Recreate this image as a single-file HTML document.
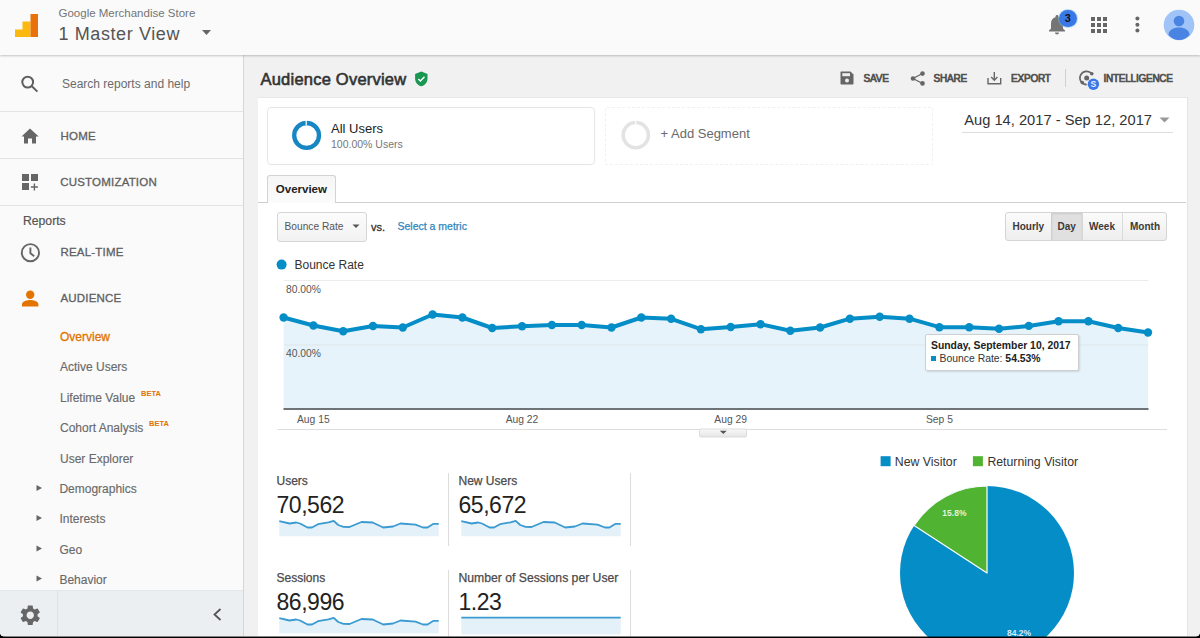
<!DOCTYPE html>
<html><head><meta charset="utf-8">
<style>
*{margin:0;padding:0;box-sizing:border-box}
html,body{width:1200px;height:638px;overflow:hidden;background:#000}
body{position:relative;font-family:"Liberation Sans",sans-serif}
.a{position:absolute}
.t{position:absolute;line-height:1;white-space:nowrap}
#page{position:absolute;left:0;top:0;width:1200px;height:637px;background:#f1f1f1;border-radius:0 0 5px 5px;overflow:hidden}
#hdr{position:absolute;left:0;top:0;width:1200px;height:54.5px;background:#fafafa;box-shadow:0 1px 2px rgba(0,0,0,.22);z-index:5}
#side{position:absolute;left:0;top:54px;width:244px;height:582px;background:#fafafa;border-right:1px solid #d6d6d6}
.sep{position:absolute;left:0;width:243px;height:1px;background:#e3e3e3}
.nav{color:#606060;font-size:11.5px;font-weight:normal;-webkit-text-stroke:0.3px #606060;letter-spacing:0.2px}
.sub{color:#6a6a6a;font-size:12px;-webkit-text-stroke:0.15px #6a6a6a}
.beta{color:#e37400;font-size:7.5px;font-weight:bold}
.tb{color:#505050;font-size:10px;font-weight:normal;-webkit-text-stroke:0.7px #505050;letter-spacing:-0.2px}
#panel{position:absolute;left:258px;top:97px;width:930px;height:539px;background:#fff;border-right:1px solid #e4e4e4;border-top:1px solid #e8e8e8}
</style></head><body>
<div id="page">
<!-- HEADER -->
<div id="hdr">
  <svg class="a" style="left:0;top:0" width="60" height="54">
    <path d="M15,29.5 H22.5 V21.5 H30.5 V37 H15 Z" fill="#fbb90f"/>
    <rect x="30.5" y="14" width="7.5" height="23" fill="#e8710a"/>
  </svg>
  <div class="t" style="left:58.5px;top:7.6px;font-size:11.5px;color:#757575">Google Merchandise Store</div>
  <div class="t" style="left:58.5px;top:25px;font-size:18px;letter-spacing:0.6px;color:#555">1 Master View</div>
  <svg class="a" style="left:200px;top:28px" width="14" height="10"><path d="M2,2 H11 L6.5,7 Z" fill="#666"/></svg>
  <!-- bell -->
  <svg class="a" style="left:1046px;top:12px" width="22" height="24" viewBox="0 0 22 24">
    <path d="M11,22.5 c1.1,0 2,-.9 2,-2 h-4 c0,1.1 .9,2 2,2z M17,16.5 v-5 c0,-3.1 -1.6,-5.6 -4.5,-6.3 V4.5 c0,-.8 -.7,-1.5 -1.5,-1.5 s-1.5,.7 -1.5,1.5 v.7 C6.6,5.9 5,8.4 5,11.5 v5 l-2,2 v1 h16 v-1 l-2,-2z" fill="#757575"/>
  </svg>
  <div class="a" style="left:1059px;top:9.8px;width:17.5px;height:17.5px;border-radius:50%;background:#3b78e7;box-shadow:0 0 0 1px rgba(120,200,230,.5)"></div>
  <div class="t" style="left:1063.3px;top:12.6px;font-size:11px;font-weight:bold;color:#111;width:9px;text-align:center">3</div>
  <!-- apps -->
  <svg class="a" style="left:1091px;top:17px" width="17" height="16">
    <g fill="#666">
      <rect x="0" y="0" width="4" height="4"/><rect x="6" y="0" width="4" height="4"/><rect x="12" y="0" width="4" height="4"/>
      <rect x="0" y="6" width="4" height="4"/><rect x="6" y="6" width="4" height="4"/><rect x="12" y="6" width="4" height="4"/>
      <rect x="0" y="12" width="4" height="4"/><rect x="6" y="12" width="4" height="4"/><rect x="12" y="12" width="4" height="4"/>
    </g>
  </svg>
  <svg class="a" style="left:1133px;top:15px" width="9" height="19">
    <g fill="#666"><circle cx="4.4" cy="3.4" r="2"/><circle cx="4.4" cy="9.8" r="2"/><circle cx="4.4" cy="15.5" r="2"/></g>
  </svg>
  <!-- avatar -->
  <svg class="a" style="left:1163px;top:9px" width="32" height="32" viewBox="0 0 32 32">
    <circle cx="16" cy="16" r="15.3" fill="#a0c3f8"/>
    <circle cx="16" cy="12" r="5.3" fill="#4a84e2"/>
    <path d="M5.5,26 c0,-5 5,-7.5 10.5,-7.5 s10.5,2.5 10.5,7.5 c-2.8,3 -6.5,5 -10.5,5 s-7.7,-2 -10.5,-5z" fill="#4a84e2"/>
  </svg>
</div>

<!-- SIDEBAR -->
<div id="side">
</div>
<svg class="a" style="left:0;top:0;z-index:2" width="243" height="636">
  <!-- search -->
  <g fill="none" stroke="#5f5f5f" stroke-width="2"><circle cx="27.7" cy="82.1" r="5.4"/><path d="M31.6,86 L37.4,91.6"/></g>
  <!-- home -->
  <path d="M30,128.5 L21.5,136.5 H24 V143.5 H28 V138.5 H32 V143.5 H36 V136.5 H38.7 Z" fill="#666"/>
  <!-- customization -->
  <g fill="#666"><rect x="22" y="174" width="7" height="7"/><rect x="31" y="174" width="7" height="7"/><rect x="22" y="183" width="7" height="7"/>
  <path d="M33.7,183.5 h1.4 v2.8 h2.8 v1.4 h-2.8 v2.8 h-1.4 v-2.8 h-2.8 v-1.4 h2.8 z"/></g>
  <!-- clock -->
  <g fill="none" stroke="#666" stroke-width="1.9"><circle cx="30.4" cy="252.7" r="8.6"/><path d="M30.4,247.5 V253.2 L34.2,256.2"/></g>
  <!-- person -->
  <g fill="#e37400"><circle cx="30.2" cy="294.8" r="4.2"/><path d="M22,306.4 V304 c0,-2.7 5.4,-4.1 8.2,-4.1 s8.2,1.4 8.2,4.1 V306.4 Z"/></g>
  <!-- arrows -->
  <g fill="#666"><path d="M36.5,485 L42,488 L36.5,491 Z"/><path d="M36.5,515 L42,518 L36.5,521 Z"/><path d="M36.5,545.5 L42,548.5 L36.5,551.5 Z"/><path d="M36.5,575.5 L42,578.5 L36.5,581.5 Z"/></g>
</svg>
<div class="sep a" style="top:111px;z-index:2"></div>
<div class="sep a" style="top:158px;z-index:2"></div>
<div class="sep a" style="top:204.5px;z-index:2"></div>
<div class="t" style="left:62px;top:77.8px;font-size:12px;color:#6b6b6b;z-index:3">Search reports and help</div>
<div class="t nav" style="left:60.5px;top:130.5px;z-index:3">HOME</div>
<div class="t nav" style="left:60.2px;top:177.3px;z-index:3">CUSTOMIZATION</div>
<div class="t" style="left:23px;top:214.5px;font-size:12.2px;color:#555;-webkit-text-stroke:0.2px #555;z-index:3">Reports</div>
<div class="t nav" style="left:60.4px;top:247.3px;z-index:3">REAL-TIME</div>
<div class="t nav" style="left:60.4px;top:293px;z-index:3">AUDIENCE</div>
<div class="t sub" style="left:60px;top:330.9px;color:#e37400;-webkit-text-stroke:0.3px #e37400;z-index:3">Overview</div>
<div class="t sub" style="left:60px;top:360.9px;z-index:3">Active Users</div>
<div class="t sub" style="left:60px;top:391.8px;z-index:3">Lifetime Value</div>
<div class="t beta" style="left:141px;top:390px;z-index:3">BETA</div>
<div class="t sub" style="left:60px;top:421.8px;z-index:3">Cohort Analysis</div>
<div class="t beta" style="left:149px;top:420px;z-index:3">BETA</div>
<div class="t sub" style="left:60px;top:452.7px;z-index:3">User Explorer</div>
<div class="t sub" style="left:59.4px;top:482.9px;z-index:3">Demographics</div>
<div class="t sub" style="left:59.4px;top:512.9px;z-index:3">Interests</div>
<div class="t sub" style="left:59.4px;top:543.5px;z-index:3">Geo</div>
<div class="t sub" style="left:59.4px;top:573.6px;z-index:3">Behavior</div>
<!-- bottom bar -->
<div class="a" style="left:0;top:590px;width:243px;height:46px;background:#eceff1;border-top:1px solid #e4e6e8;z-index:2"></div>
<div class="a" style="left:57px;top:591px;width:1px;height:45px;background:#dfe1e3;z-index:3"></div>
<svg class="a" style="left:18.4px;top:602.6px;z-index:3" width="24.5" height="24.5" viewBox="0 0 24 24">
  <path fill="#666" d="M19.14,12.94c.04-.3.06-.61.06-.94 0-.32-.02-.64-.07-.94l2.03-1.58c.18-.14.23-.41.12-.61l-1.92-3.32c-.12-.22-.37-.29-.59-.22l-2.39.96c-.5-.38-1.03-.7-1.62-.94l-.36-2.54c-.04-.24-.24-.41-.48-.41h-3.84c-.24,0-.43.17-.47.41l-.36,2.54c-.59.24-1.13.57-1.62.94l-2.39-.96c-.22-.08-.47,0-.59.22L2.74,8.87c-.12.21-.08.47.12.61l2.03,1.58c-.05.3-.09.63-.09.94s.02.64.07.94l-2.03,1.58c-.18.14-.23.41-.12.61l1.92,3.32c.12.22.37.29.59.22l2.39-.96c.5.38,1.03.7,1.62.94l.36,2.54c.05.24.24.41.48.41h3.84c.24,0,.44-.17.47-.41l.36-2.54c.59-.24,1.13-.56,1.62-.94l2.39.96c.22.08.47,0,.59-.22l1.92-3.32c.12-.22.07-.47-.12-.61l-2.01-1.58zM12,15.6c-1.98,0-3.6-1.62-3.6-3.6s1.62-3.6,3.6-3.6 3.6,1.62 3.6,3.6-1.62,3.6-3.6,3.6z"/>
</svg>
<svg class="a" style="left:210px;top:606px;z-index:3" width="14" height="16"><path d="M10.5,3 L4.5,8.5 L10.5,14" fill="none" stroke="#555" stroke-width="1.8"/></svg>

<!-- TOOLBAR -->
<div class="t" style="left:260.5px;top:71.2px;font-size:16.5px;font-weight:normal;-webkit-text-stroke:0.6px #333;letter-spacing:0.22px;color:#333">Audience Overview</div>
<svg class="a" style="left:414px;top:70.5px" width="15" height="16" viewBox="0 0 15 16">
  <path d="M7.3,0.5 L13.5,3 V7.5 C13.5,11.3 10.8,14.5 7.3,15.3 C3.8,14.5 1.1,11.3 1.1,7.5 V3 Z" fill="#17974f"/>
  <path d="M4.3,8 L6.4,10 L10.5,5.8" fill="none" stroke="#fff" stroke-width="1.5"/>
</svg>
<!-- save -->
<svg class="a" style="left:840px;top:71px" width="14" height="14" viewBox="0 0 14 14">
  <path d="M0.5,1.5 C0.5,0.9 0.9,0.5 1.5,0.5 H10.5 L13.5,3.5 V12.5 C13.5,13.1 13.1,13.5 12.5,13.5 H1.5 C0.9,13.5 0.5,13.1 0.5,12.5 Z" fill="#666"/>
  <rect x="2.3" y="2.2" width="7.7" height="3" fill="#eee"/>
  <circle cx="7" cy="9.5" r="2" fill="#eee"/>
</svg>
<div class="t tb" style="left:863.5px;top:73.5px">SAVE</div>
<svg class="a" style="left:910px;top:70.5px" width="16" height="15" viewBox="0 0 16 15">
  <g fill="#666"><circle cx="12.5" cy="2.6" r="2.3"/><circle cx="3" cy="7.5" r="2.3"/><circle cx="12.5" cy="12.4" r="2.3"/></g>
  <path d="M12.5,2.5 L3,7.5 L12.5,12.5" fill="none" stroke="#666" stroke-width="1.3"/>
</svg>
<div class="t tb" style="left:933.5px;top:73.5px">SHARE</div>
<svg class="a" style="left:987px;top:71px" width="15" height="14" viewBox="0 0 15 14">
  <path d="M1,7 V12.7 H13.7 V7" fill="none" stroke="#666" stroke-width="1.4"/>
  <path d="M7.3,1 V9" fill="none" stroke="#666" stroke-width="1.4"/>
  <path d="M4.2,6 L7.3,9.2 L10.4,6" fill="none" stroke="#666" stroke-width="1.4"/>
</svg>
<div class="t tb" style="left:1011px;top:73.5px">EXPORT</div>
<div class="a" style="left:1065px;top:68.5px;width:1px;height:18.5px;background:#d0d0d0"></div>
<svg class="a" style="left:1079px;top:70px" width="22" height="21" viewBox="0 0 22 21">
  <path d="M12.8,3.7 A6.7,6.7 0 1 0 7.7,14.7" fill="none" stroke="#666" stroke-width="1.7"/>
  <circle cx="7.7" cy="8" r="2.5" fill="#666"/>
  <circle cx="12.8" cy="3.7" r="1.8" fill="#666"/><circle cx="3.3" cy="12.6" r="1.8" fill="#666"/>
  <circle cx="14.4" cy="14.3" r="5.7" fill="#3b78e7"/>
  <text x="14.4" y="17.3" font-size="8.5" font-weight="bold" fill="#e8f0ff" text-anchor="middle" font-family="Liberation Sans">S</text>
</svg>
<div class="t tb" style="left:1103.5px;top:73.5px;font-size:10px;letter-spacing:-0.25px">INTELLIGENCE</div>

<!-- PANEL -->
<div id="panel"></div>
<div class="a" style="left:1188px;top:97px;width:12px;height:539px;background:#f1f1f1"></div>
<!-- segments -->
<div class="a" style="left:267px;top:107px;width:328px;height:58px;border:1px solid #e5e5e5;border-radius:4px"></div>
<svg class="a" style="left:290px;top:119px" width="33" height="33">
  <circle cx="16.6" cy="16.4" r="12.4" fill="none" stroke="#1787c4" stroke-width="4.3"/>
  <rect x="15.6" y="0" width="1.2" height="6" fill="#fff"/>
</svg>
<div class="t" style="left:331px;top:122.4px;font-size:13px;color:#222">All Users</div>
<div class="t" style="left:331px;top:138.7px;font-size:10.5px;color:#777">100.00% Users</div>
<div class="a" style="left:605px;top:107px;width:328px;height:58px;border:1px dashed #f0f0f0;border-radius:2px"></div>
<svg class="a" style="left:620px;top:119px" width="32" height="32">
  <circle cx="15.8" cy="16.1" r="12.6" fill="none" stroke="#e3e3e3" stroke-width="3.6"/><rect x="15.2" y="0" width="1.1" height="6" fill="#fff"/>
</svg>
<div class="t" style="left:660.5px;top:127px;font-size:13px;color:#6a6a6a">+ Add Segment</div>
<div class="t" style="left:964.2px;top:112.6px;font-size:14.7px;color:#333">Aug 14, 2017 - Sep 12, 2017</div>
<svg class="a" style="left:1158px;top:116px" width="13" height="8"><path d="M1.5,1.5 H11.5 L6.5,6.5 Z" fill="#999"/></svg>
<div class="a" style="left:962px;top:132px;width:211px;height:1px;background:#ddd"></div>

<!-- tabs -->
<div class="a" style="left:258px;top:202px;width:928px;height:1px;background:#cfcfcf"></div>
<div class="a" style="left:267px;top:175px;width:68.5px;height:28px;background:linear-gradient(#f6f6f6,#fbfbfb);border:1px solid #d3d3d3;border-bottom:none;border-radius:3px 3px 0 0"></div>
<div class="t" style="left:275.8px;top:184px;font-size:11.5px;font-weight:bold;color:#222">Overview</div>

<!-- metric selector -->
<div class="a" style="left:277px;top:212px;width:90px;height:29.5px;background:linear-gradient(#fcfcfc,#f2f2f2);border:1px solid #d6d6d6;border-radius:3px"></div>
<div class="t" style="left:284.5px;top:221.7px;font-size:10.2px;color:#555">Bounce Rate</div>
<svg class="a" style="left:351px;top:223px" width="10" height="7"><path d="M1.5,1.5 H8.5 L5,5 Z" fill="#555"/></svg>
<div class="t" style="left:371px;top:221.5px;font-size:11px;color:#333;-webkit-text-stroke:0.3px #333">vs.</div>
<div class="t" style="left:397.5px;top:221.2px;font-size:10.5px;color:#2f86bd;-webkit-text-stroke:0.25px #2f86bd">Select a metric</div>

<!-- period buttons -->
<div class="a" style="left:1005px;top:212px;width:162px;height:29px;border:1px solid #d4d4d4;border-radius:3px;background:linear-gradient(#fbfbfb,#eeeeee)"></div>
<div class="a" style="left:1050.5px;top:213px;width:32px;height:27px;background:#e0e0e0;border-left:1px solid #cfcfcf;border-right:1px solid #d6d6d6;box-shadow:inset 0 1px 2px rgba(0,0,0,.1)"></div>
<div class="a" style="left:1122px;top:213px;width:1px;height:27px;background:#dadada"></div>
<div class="t tb" style="left:1012.5px;top:222.3px;color:#3a3a3a;letter-spacing:0;font-weight:bold;-webkit-text-stroke:0">Hourly</div>
<div class="t tb" style="left:1057.5px;top:222.3px;color:#3a3a3a;letter-spacing:0;font-weight:bold;-webkit-text-stroke:0">Day</div>
<div class="t tb" style="left:1089px;top:222.3px;color:#3a3a3a;letter-spacing:0;font-weight:bold;-webkit-text-stroke:0">Week</div>
<div class="t tb" style="left:1130px;top:222.3px;color:#3a3a3a;letter-spacing:0;font-weight:bold;-webkit-text-stroke:0">Month</div>

<!-- legend -->
<svg class="a" style="left:276px;top:259px" width="12" height="12"><circle cx="5.6" cy="5.6" r="5" fill="#058dc7"/></svg>
<div class="t" style="left:294.5px;top:259px;font-size:12px;color:#333">Bounce Rate</div>

<!-- MAIN CHART -->
<svg class="a" style="left:0;top:0" width="1200" height="638">
  <line x1="284" y1="280.5" x2="1148.5" y2="280.5" stroke="#ececec" stroke-width="1"/>
  <polygon fill="#e6f3fa" points="283.6,409 283.6,317.5 313.4,325.5 343.2,331.2 373.0,326.0 402.8,327.5 432.6,314.5 462.4,317.5 492.2,328.0 522.1,326.2 551.9,325.0 581.7,325.0 611.5,327.5 641.3,317.5 671.1,318.8 700.9,329.2 730.7,327.0 760.5,324.2 790.3,330.8 820.1,327.5 849.9,318.7 879.7,316.8 909.5,318.7 939.4,327.2 969.2,327.2 999.0,328.8 1028.8,325.9 1058.6,321.3 1088.4,321.3 1118.2,328.0 1148.0,332.5 1148,409"/>
  <line x1="284" y1="345" x2="1148.5" y2="345" stroke="#dfe6ea" stroke-width="1"/>
  <line x1="283.5" y1="409" x2="1148.5" y2="409" stroke="#6e7377" stroke-width="2"/>
  <line x1="277.5" y1="429.5" x2="1167" y2="429.5" stroke="#dedede" stroke-width="1"/>
  <polyline fill="none" stroke="#058dc7" stroke-width="4" stroke-linejoin="round" points="283.6,317.5 313.4,325.5 343.2,331.2 373.0,326.0 402.8,327.5 432.6,314.5 462.4,317.5 492.2,328.0 522.1,326.2 551.9,325.0 581.7,325.0 611.5,327.5 641.3,317.5 671.1,318.8 700.9,329.2 730.7,327.0 760.5,324.2 790.3,330.8 820.1,327.5 849.9,318.7 879.7,316.8 909.5,318.7 939.4,327.2 969.2,327.2 999.0,328.8 1028.8,325.9 1058.6,321.3 1088.4,321.3 1118.2,328.0 1148.0,332.5"/>
  <g fill="#058dc7"><circle cx="283.6" cy="317.5" r="4.2"/> <circle cx="313.4" cy="325.5" r="4.2"/> <circle cx="343.2" cy="331.2" r="4.2"/> <circle cx="373.0" cy="326.0" r="4.2"/> <circle cx="402.8" cy="327.5" r="4.2"/> <circle cx="432.6" cy="314.5" r="4.2"/> <circle cx="462.4" cy="317.5" r="4.2"/> <circle cx="492.2" cy="328.0" r="4.2"/> <circle cx="522.1" cy="326.2" r="4.2"/> <circle cx="551.9" cy="325.0" r="4.2"/> <circle cx="581.7" cy="325.0" r="4.2"/> <circle cx="611.5" cy="327.5" r="4.2"/> <circle cx="641.3" cy="317.5" r="4.2"/> <circle cx="671.1" cy="318.8" r="4.2"/> <circle cx="700.9" cy="329.2" r="4.2"/> <circle cx="730.7" cy="327.0" r="4.2"/> <circle cx="760.5" cy="324.2" r="4.2"/> <circle cx="790.3" cy="330.8" r="4.2"/> <circle cx="820.1" cy="327.5" r="4.2"/> <circle cx="849.9" cy="318.7" r="4.2"/> <circle cx="879.7" cy="316.8" r="4.2"/> <circle cx="909.5" cy="318.7" r="4.2"/> <circle cx="939.4" cy="327.2" r="4.2"/> <circle cx="969.2" cy="327.2" r="4.2"/> <circle cx="999.0" cy="328.8" r="4.2"/> <circle cx="1028.8" cy="325.9" r="4.2"/> <circle cx="1058.6" cy="321.3" r="4.2"/> <circle cx="1088.4" cy="321.3" r="4.2"/> <circle cx="1118.2" cy="328.0" r="4.2"/> <circle cx="1148.0" cy="332.5" r="4.2"/></g>
  <!-- collapse btn -->
  <defs><linearGradient id="cg" x1="0" y1="0" x2="0" y2="1"><stop offset="0" stop-color="#f8f8f8"/><stop offset="1" stop-color="#e6e6e6"/></linearGradient></defs><rect x="699.5" y="429" width="47" height="8" rx="1.5" fill="url(#cg)" stroke="#d4d4d4" stroke-width="0.8"/>
  <path d="M719.8,430.8 H726.8 L723.3,434 Z" fill="#555"/>
</svg>
<div class="t" style="left:286px;top:285.2px;font-size:10.3px;color:#555">80.00%</div>
<div class="t" style="left:286px;top:349.3px;font-size:10.3px;color:#555">40.00%</div>
<div class="t" style="left:297px;top:415.2px;font-size:10.3px;color:#555">Aug 15</div>
<div class="t" style="left:505.7px;top:415.2px;font-size:10.3px;color:#555">Aug 22</div>
<div class="t" style="left:714.3px;top:415.2px;font-size:10.3px;color:#555">Aug 29</div>
<div class="t" style="left:926px;top:415.2px;font-size:10.3px;color:#555">Sep 5</div>

<!-- tooltip -->
<div class="a" style="left:924.5px;top:333.5px;width:154px;height:37px;background:rgba(255,255,255,.95);border:1px solid #cfcfcf;border-radius:2px;box-shadow:1px 1px 2px rgba(0,0,0,.12)"></div>
<div class="t" style="left:931px;top:340.6px;font-size:10.4px;font-weight:bold;color:#222">Sunday, September 10, 2017</div>
<div class="a" style="left:931px;top:355.7px;width:5px;height:5px;background:#058dc7"></div>
<div class="t" style="left:939.5px;top:354.2px;font-size:10.4px;color:#333">Bounce Rate: <b style="color:#222">54.53%</b></div>

<!-- METRICS -->
<div class="t" style="left:276.5px;top:474.6px;font-size:12px;color:#4a4a4a;-webkit-text-stroke:0.25px #4a4a4a">Users</div>
<div class="t" style="left:276.5px;top:494.1px;font-size:23px;letter-spacing:-0.45px;color:#222">70,562</div>
<div class="t" style="left:458.5px;top:474.8px;font-size:12px;color:#4a4a4a;-webkit-text-stroke:0.25px #4a4a4a">New Users</div>
<div class="t" style="left:458.5px;top:493.9px;font-size:23px;letter-spacing:-0.45px;color:#222">65,672</div>
<div class="t" style="left:276.5px;top:571.8px;font-size:12px;color:#4a4a4a;-webkit-text-stroke:0.25px #4a4a4a">Sessions</div>
<div class="t" style="left:276.5px;top:590.9px;font-size:23px;letter-spacing:-0.45px;color:#222">86,996</div>
<div class="t" style="left:458.5px;top:572px;font-size:12.2px;color:#4a4a4a;-webkit-text-stroke:0.25px #4a4a4a">Number of Sessions per User</div>
<div class="t" style="left:458.5px;top:591.1px;font-size:23px;letter-spacing:-0.45px;color:#222">1.23</div>
<div class="a" style="left:448px;top:473px;width:1px;height:73px;background:#dcdcdc"></div>
<div class="a" style="left:630px;top:473px;width:1px;height:73px;background:#dcdcdc"></div>
<div class="a" style="left:448px;top:570px;width:1px;height:68px;background:#dcdcdc"></div>
<div class="a" style="left:630px;top:570px;width:1px;height:68px;background:#dcdcdc"></div>
<svg class="a" style="left:0;top:0" width="1200" height="638">
  <defs>
    <g id="spk">
      <polygon fill="#e5f1f8" points="279.3,536.3 279.3,521.2 289.5,523.5 296.2,522.5 300,523.5 307.5,527.5 312,527.5 318,524.2 328.5,522.3 333.7,520.8 338.2,525 343.5,526.8 349.5,527 361.5,522 372.7,522.5 383.2,527.5 393,526.5 400.5,523.5 415.5,524.7 423,527.5 427.5,527.5 433.5,523.8 438.7,523.8 438.7,536.3"/>
      <polyline fill="none" stroke="#3a9ad1" stroke-width="1.8" stroke-linejoin="round" points="279.3,521.2 289.5,523.5 296.2,522.5 300,523.5 307.5,527.5 312,527.5 318,524.2 328.5,522.3 333.7,520.8 338.2,525 343.5,526.8 349.5,527 361.5,522 372.7,522.5 383.2,527.5 393,526.5 400.5,523.5 415.5,524.7 423,527.5 427.5,527.5 433.5,523.8 438.7,523.8"/>
    </g>
  </defs>
  <use href="#spk"/>
  <use href="#spk" transform="translate(182,0)"/>
  <use href="#spk" transform="translate(0,97)"/>
  <rect x="461.3" y="617.5" width="159.4" height="17" fill="#e5f1f8"/>
  <line x1="461.3" y1="617.6" x2="620.7" y2="617.6" stroke="#3a9ad1" stroke-width="1.8"/>
</svg>

<!-- PIE -->
<svg class="a" style="left:880px;top:455px" width="12" height="12"><rect x="0.6" y="1.2" width="10" height="10" fill="#058dc7"/></svg>
<div class="t" style="left:894.8px;top:455.6px;font-size:12.3px;color:#333">New Visitor</div>
<svg class="a" style="left:972px;top:455px" width="12" height="12"><rect x="0.9" y="1.2" width="10" height="10" fill="#50b432"/></svg>
<div class="t" style="left:987.4px;top:455.6px;font-size:12.3px;color:#333">Returning Visitor</div>
<svg class="a" style="left:0;top:0" width="1200" height="638">
  <circle cx="987" cy="573" r="87" fill="#058dc7"/>
  <path d="M987,573 L987,486 A87,87 0 0,0 914.1,525.5 Z" fill="#50b432" stroke="#fff" stroke-width="1.2" stroke-linejoin="round"/>
  <text x="954.4" y="516" font-size="8.5" font-weight="bold" fill="#fff" fill-opacity=".85" text-anchor="middle" font-family="Liberation Sans">15.8%</text>
  <text x="1019" y="636" font-size="8.5" font-weight="bold" fill="#fff" fill-opacity=".85" text-anchor="middle" font-family="Liberation Sans">84.2%</text>
</svg>
<div class="a" style="left:0;top:636px;width:1200px;height:1px;background:rgba(0,0,0,.45);z-index:20"></div>
</div>
</body></html>
